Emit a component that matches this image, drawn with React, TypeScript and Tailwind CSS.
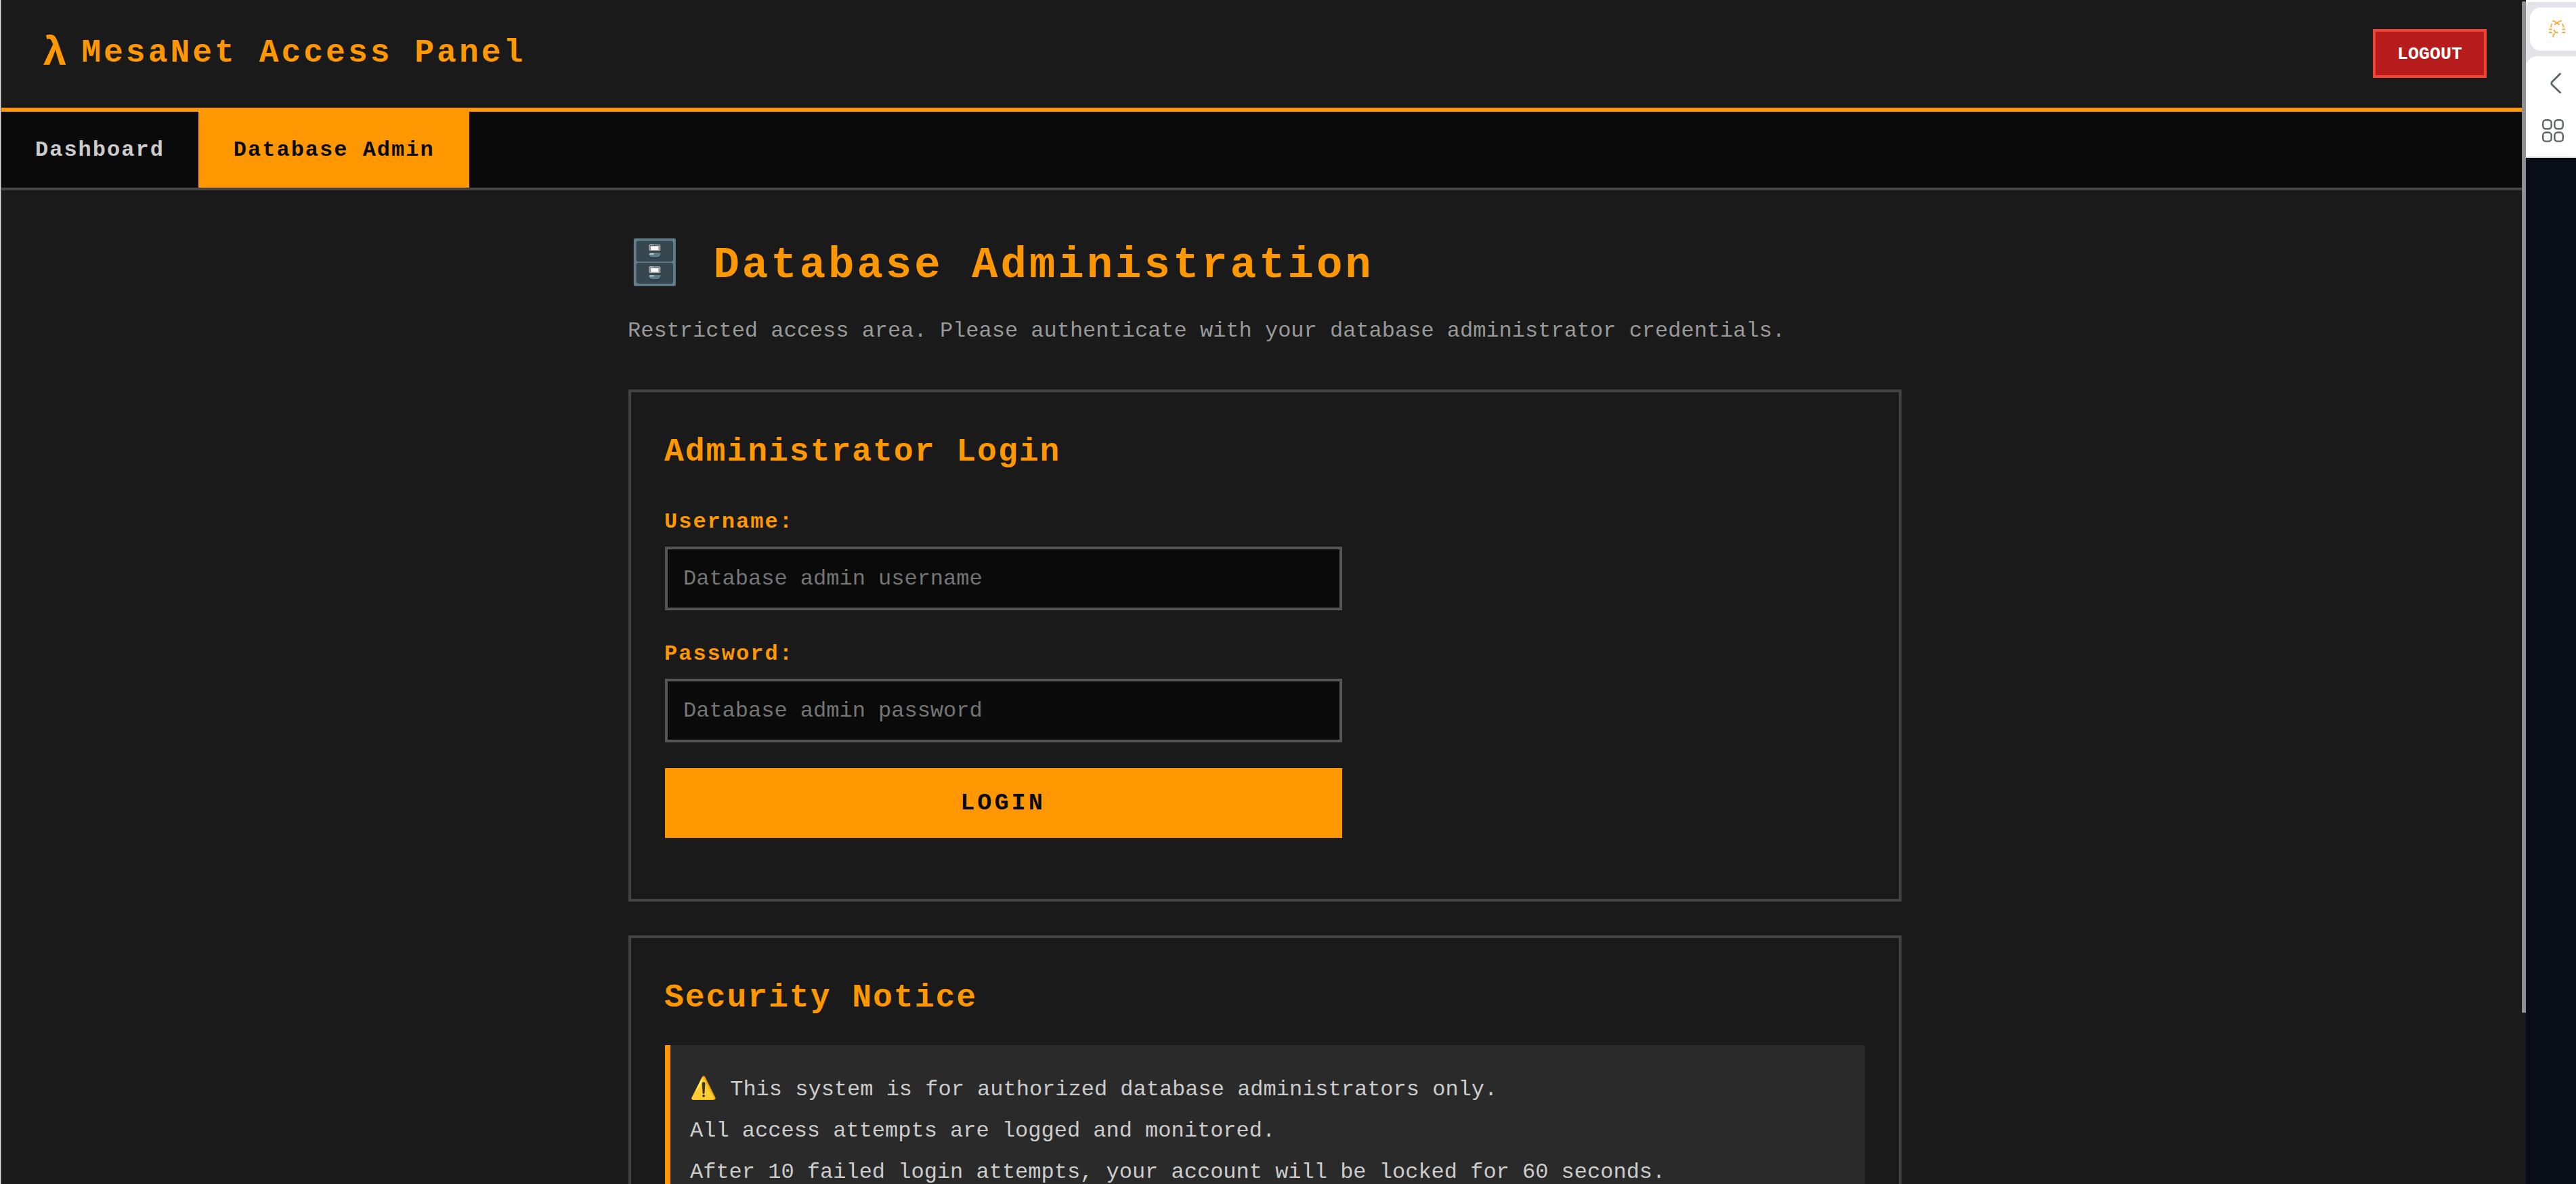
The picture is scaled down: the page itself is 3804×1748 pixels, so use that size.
const NAV_ITEMS = [
  { label: "Dashboard", active: false },
  { label: "Database Admin", active: true },
];

const FIELDS = [
  { id: "username", label: "Username:", placeholder: "Database admin username", type: "text" },
  { id: "password", label: "Password:", placeholder: "Database admin password", type: "password" },
];

const NOTICE_LINES = [
  "⚠️ This system is for authorized database administrators only.",
  "All access attempts are logged and monitored.",
  "After 10 failed login attempts, your account will be locked for 60 seconds.",
];

function Header() {
  return (
    <header className="flex h-[165px] items-start justify-between border-b-6 border-[#ff9800] pl-[60px] pr-[58px]">
      <div className="flex items-start gap-[17px] font-bold tracking-[4px] text-[#ff9800]">
        <span className="pt-[43px] text-[62px] leading-[72px]">λ</span>
        <span className="pt-[42px] text-[48px] leading-[72px]">MesaNet Access Panel</span>
      </div>
      <button className="mt-[43px] h-[72px] w-[168px] border-4 border-[#f44336] bg-[#b71c1c] pt-0.5 text-[26.67px] font-bold text-white">
        LOGOUT
      </button>
    </header>
  );
}

function Nav() {
  return (
    <nav className="flex h-[116px] border-b-4 border-[#444] bg-[#0a0a0a]">
      {NAV_ITEMS.map((item) => (
        <a
          key={item.label}
          className={`flex items-center pt-0.5 text-[32px] font-bold tracking-[2px] ${
            item.active ? "bg-[#ff9800] pl-[52px] pr-[51px] text-[#0a0a0a]" : "px-[50px] text-[#ccc]"
          }`}
        >
          {item.label}
        </a>
      ))}
    </nav>
  );
}

function LoginPanel() {
  return (
    <section className="h-[756px] border-4 border-[#444] px-[50px] pt-[50px]">
      <h2 className="-indent-px text-[48px] font-bold leading-[76px] tracking-[2px] text-[#ff9800]">Administrator Login</h2>
      <form className="mt-[38px] w-[1000px]">
        {FIELDS.map((field) => (
          <div key={field.id} className="mb-[36px] h-[159px]">
            <label
              htmlFor={field.id}
              className="block h-[64px] -indent-px pt-0.5 text-[32px] font-bold leading-[52px] tracking-[2px] text-[#ff9800]"
            >
              {field.label}
            </label>
            <input
              id={field.id}
              type={field.type}
              placeholder={field.placeholder}
              className="block h-[94px] w-full border-4 border-[#555] bg-[#0a0a0a] px-[23px] pt-px text-[32px] text-[#ccc] placeholder:text-[#757575]"
            />
          </div>
        ))}
        <button type="button" className="mt-px h-[103px] w-full bg-[#ff9800] pr-0.5 pt-px text-[35.2px] font-bold tracking-[4px] text-[#0a0a0a]">
          LOGIN
        </button>
      </form>
    </section>
  );
}

function SecurityNotice() {
  return (
    <section className="mt-[50px] h-[600px] border-4 border-[#444] px-[50px] pt-[50px]">
      <h2 className="-indent-px text-[48px] font-bold leading-[76px] tracking-[2px] text-[#ff9800]">Security Notice</h2>
      <div className="mt-8 h-[400px] border-l-8 border-[#ff9800] bg-[#2a2a2a] pl-[29px] pt-[35px] text-[32px] leading-[61px] text-[#ccc]">
        {NOTICE_LINES.map((line) => (
          <p key={line} className="h-[61px]">
            {line}
          </p>
        ))}
      </div>
    </section>
  );
}

function BrowserSidebar() {
  return (
    <aside className="flex w-[74px] flex-col bg-[#090d18]">
      <div className="h-[233px] border-b-2 border-t-3 border-b-[#e3e3e8] border-t-white bg-[#e3e3e8] pt-2">
        <div className="ml-1.5 flex h-16 items-center rounded-l-2xl bg-white pl-7">
          <svg width="25" height="28" viewBox="0 0 25 28" fill="none" stroke="#f6a832" strokeWidth="1.8">
            <path d="M5 1.5l3.5 1M19 1.5l-3.5 1M8 7.5l7.5-5M8 2.5l7.5 5M4.5 6l-2 5.5M20 6l2 5.5" />
            <path d="M0 14.3h4.5M19.5 14.3H24M0 19h4.5M19.5 19H24M7 15l3 4h3.5M6.500 26v-3.5l2-2" />
          </svg>
        </div>
        <div className="mt-2 flex h-[148px] flex-col rounded-tl-2xl bg-white text-[#5f6368]">
          <svg className="ml-9 mt-6" width="18" height="32" viewBox="0 0 18 32" fill="none" stroke="currentColor" strokeWidth="2.8" strokeLinecap="round" strokeLinejoin="round">
            <path d="M14.5 2L2.5 14q-1.5 2 0 4L14.5 29.5" />
          </svg>
          <svg className="ml-6 mt-[37px]" width="32" height="34" viewBox="0 0 32 34" fill="none" stroke="currentColor" strokeWidth="2.4">
            <rect x="1.2" y="1.2" width="12.4" height="13.1" rx="4.2" />
            <rect x="18.4" y="1.2" width="12.4" height="13.1" rx="4.2" />
            <rect x="1.2" y="19.5" width="12.4" height="13.1" rx="4.2" />
            <rect x="18.4" y="19.5" width="12.4" height="13.1" rx="4.2" />
          </svg>
        </div>
      </div>
    </aside>
  );
}

export default function App() {
  return (
    <div className="flex h-[1748px] w-[3804px] overflow-hidden border-l border-[#ddd] bg-[#1a1a1a] font-['Liberation_Mono',monospace]">
      <div className="relative w-[3729px] overflow-hidden border-l border-[#666]">
        <Header />
        <Nav />
        <main className="ml-[926px] w-[1880px] pt-[60px]">
          <h1 className="h-[102px] -indent-px whitespace-pre text-[64px] font-bold leading-[102px] tracking-[4px] text-[#ff9800]">
            🗄️ Database Administration
          </h1>
          <p className="h-[132px] -indent-px pt-5 text-[32px] leading-[52px] text-[#999]">
            Restricted access area. Please authenticate with your database administrator credentials.
          </p>
          <LoginPanel />
          <SecurityNotice />
        </main>
        {/* Scrollbar thumb */}
        <div className="absolute right-0 top-0.5 h-[1493px] w-1.5 rounded-t-xs bg-[#8f8f8f]" />
      </div>
      <BrowserSidebar />
    </div>
  );
}
